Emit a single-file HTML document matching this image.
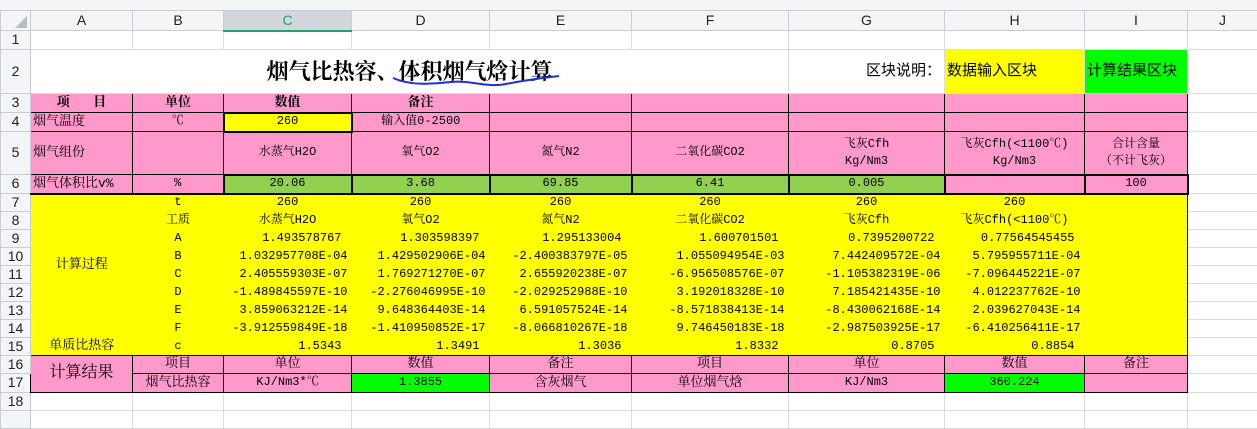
<!DOCTYPE html>
<html><head><meta charset="utf-8">
<style>
body{margin:0;width:1257px;height:413px;overflow:hidden;background:#fff;font-family:"Liberation Mono","Noto Serif CJK SC",monospace;}
.top{position:absolute;left:0;top:0;width:1257px;height:10px;background:#f4f5f7;}
table{position:absolute;left:0;top:10px;border-collapse:collapse;table-layout:fixed;width:1257px;}
td{border:1px solid #dadce2;padding:0;font-size:12px;color:#000;text-align:center;white-space:nowrap;overflow:hidden;line-height:1.1;vertical-align:middle;}
.hd{background:#f4f5f7;color:#222;font-family:"Liberation Sans",sans-serif;font-size:14px;border-color:#c8ccd6;}
.rh{background:#f4f5f7;color:#222;font-family:"Liberation Sans",sans-serif;font-size:14px;border-color:#c8ccd6;}
.p{background:#ff99cc;border:1px solid #000;}
.g{background:#92d050;border:2px solid #000;}
.G{background:#00ff00;border:1px solid #000;}
.b{font-weight:bold;font-size:13px;}
.l{text-align:left;padding-left:2px;font-size:13px;}
.yy{background:#ffff00;border:none;}
.r{text-align:right;padding-right:4px;}
.r2{text-align:right;padding-right:10px;}
</style></head><body>
<div class="top"></div>
<table>
<colgroup><col style="width:30px"><col style="width:102px"><col style="width:91px"><col style="width:128px"><col style="width:138px"><col style="width:142px"><col style="width:157px"><col style="width:156px"><col style="width:140px"><col style="width:103px"><col style="width:70px"></colgroup>
<tr style="height:20px"><td class="hd" style="position:relative"><span style="position:absolute;left:14px;bottom:2px;width:0;height:0;border-left:12px solid transparent;border-bottom:12px solid #b8bcc4"></span></td><td class="hd">A</td><td class="hd">B</td><td class="hd" style="background:#d3d6dc;color:#1e9e6a;border-bottom:2px solid #21a366">C</td><td class="hd">D</td><td class="hd">E</td><td class="hd">F</td><td class="hd">G</td><td class="hd">H</td><td class="hd">I</td><td class="hd">J</td></tr>
<tr style="height:19px"><td class="rh">1</td><td></td><td></td><td></td><td></td><td></td><td></td><td></td><td></td><td></td><td></td></tr>
<tr style="height:44px"><td class="rh">2</td><td colspan="6" style="font-family:'Noto Serif CJK SC',serif;font-size:22px;font-weight:bold;position:relative;border-right-color:#dadce2">烟气比热容、体积烟气焓计算<svg style="position:absolute;left:360px;top:24px" width="170" height="14"><path d="M2 4 C20 12 40 10 60 8 C80 6 95 14 115 10 C135 6 150 4 168 2" stroke="#1a2fd8" stroke-width="2" fill="none"/></svg></td><td style="text-align:right;font-family:'Liberation Sans','Noto Sans CJK SC',sans-serif;font-size:15px;padding-right:3px">区块说明：</td><td class="l" style="background:#ffff00;font-family:'Liberation Sans','Noto Sans CJK SC',sans-serif;font-size:15px">数据输入区块</td><td class="l" style="background:#00ff00;font-family:'Liberation Sans','Noto Sans CJK SC',sans-serif;font-size:15px">计算结果区块</td><td></td></tr>
<tr style="height:19px"><td class="rh">3</td><td class="p b">项&nbsp;&nbsp;&nbsp;目</td><td class="p b">单位</td><td class="p b">数值</td><td class="p b">备注</td><td class="p"></td><td class="p"></td><td class="p"></td><td class="p"></td><td class="p"></td><td></td></tr>
<tr style="height:19px"><td class="rh">4</td><td class="p l">烟气温度</td><td class="p">℃</td><td style="background:#ffff00;border:2px solid #000">260</td><td class="p">输入值0-2500</td><td class="p"></td><td class="p"></td><td class="p"></td><td class="p"></td><td class="p"></td><td></td></tr>
<tr style="height:43px"><td class="rh">5</td><td class="p l">烟气组份</td><td class="p"></td><td class="p">水蒸气H2O</td><td class="p">氧气O2</td><td class="p">氮气N2</td><td class="p">二氧化碳CO2</td><td class="p" style="line-height:1.4">飞灰Cfh<br>Kg/Nm3</td><td class="p" style="line-height:1.4">飞灰Cfh(&lt;1100℃)<br>Kg/Nm3</td><td class="p" style="line-height:1.4">合计含量<br>（不计飞灰）</td><td></td></tr>
<tr style="height:19px"><td class="rh">6</td><td class="p l">烟气体积比v%</td><td class="p">%</td><td class="g">20.06</td><td class="g">3.68</td><td class="g">69.85</td><td class="g">6.41</td><td class="g">0.005</td><td class="p" style="border:2px solid #000"></td><td class="p" style="border:2px solid #000">100</td><td></td></tr>
<tr style="height:18px"><td class="rh">7</td><td class="yy" style="border-top:2px solid #000"></td><td class="yy" style="border-top:2px solid #000">t</td><td class="yy" style="border-top:2px solid #000">260</td><td class="yy" style="border-top:2px solid #000">260</td><td class="yy" style="border-top:2px solid #000">260</td><td class="yy" style="border-top:2px solid #000">260</td><td class="yy" style="border-top:2px solid #000">260</td><td class="yy" style="border-top:2px solid #000">260</td><td class="yy" style="border-top:2px solid #000;border-right:1px solid #000"></td><td></td></tr>
<tr style="height:18px"><td class="rh">8</td><td class="yy"></td><td class="yy">工质</td><td class="yy">水蒸气H2O</td><td class="yy">氧气O2</td><td class="yy">氮气N2</td><td class="yy">二氧化碳CO2</td><td class="yy">飞灰Cfh</td><td class="yy">飞灰Cfh(&lt;1100℃)</td><td class="yy" style="border-right:1px solid #000"></td><td></td></tr>
<tr style="height:18px"><td class="rh">9</td><td class="yy" rowspan="4" style="font-size:13px">计算过程</td><td class="yy">A</td><td class="yy r2">1.493578767</td><td class="yy r2">1.303598397</td><td class="yy r2">1.295133004</td><td class="yy r2">1.600701501</td><td class="yy r2">0.7395200722</td><td class="yy r2">0.77564545455</td><td class="yy" style="border-right:1px solid #000"></td><td></td></tr>
<tr style="height:18px"><td class="rh">10</td><td class="yy">B</td><td class="yy r">1.032957708E-04</td><td class="yy r">1.429502906E-04</td><td class="yy r">-2.400383797E-05</td><td class="yy r">1.055094954E-03</td><td class="yy r">7.442409572E-04</td><td class="yy r">5.795955711E-04</td><td class="yy" style="border-right:1px solid #000"></td><td></td></tr>
<tr style="height:18px"><td class="rh">11</td><td class="yy">C</td><td class="yy r">2.405559303E-07</td><td class="yy r">1.769271270E-07</td><td class="yy r">2.655920238E-07</td><td class="yy r">-6.956508576E-07</td><td class="yy r">-1.105382319E-06</td><td class="yy r">-7.096445221E-07</td><td class="yy" style="border-right:1px solid #000"></td><td></td></tr>
<tr style="height:18px"><td class="rh">12</td><td class="yy">D</td><td class="yy r">-1.489845597E-10</td><td class="yy r">-2.276046995E-10</td><td class="yy r">-2.029252988E-10</td><td class="yy r">3.192018328E-10</td><td class="yy r">7.185421435E-10</td><td class="yy r">4.012237762E-10</td><td class="yy" style="border-right:1px solid #000"></td><td></td></tr>
<tr style="height:18px"><td class="rh">13</td><td class="yy"></td><td class="yy">E</td><td class="yy r">3.859063212E-14</td><td class="yy r">9.648364403E-14</td><td class="yy r">6.591057524E-14</td><td class="yy r">-8.571838413E-14</td><td class="yy r">-8.430062168E-14</td><td class="yy r">2.039627043E-14</td><td class="yy" style="border-right:1px solid #000"></td><td></td></tr>
<tr style="height:18px"><td class="rh">14</td><td class="yy"></td><td class="yy">F</td><td class="yy r">-3.912559849E-18</td><td class="yy r">-1.410950852E-17</td><td class="yy r">-8.066810267E-18</td><td class="yy r">9.746450183E-18</td><td class="yy r">-2.987503925E-17</td><td class="yy r">-6.410256411E-17</td><td class="yy" style="border-right:1px solid #000"></td><td></td></tr>
<tr style="height:18px"><td class="rh">15</td><td class="yy" style="font-size:13px">单质比热容</td><td class="yy">c</td><td class="yy r2">1.5343</td><td class="yy r2">1.3491</td><td class="yy r2">1.3036</td><td class="yy r2">1.8332</td><td class="yy r2">0.8705</td><td class="yy r2">0.8854</td><td class="yy" style="border-right:1px solid #000"></td><td></td></tr>
<tr style="height:18px"><td class="rh">16</td><td class="p" rowspan="2" style="font-size:16px">计算结果</td><td class="p" style="font-size:13px">项目</td><td class="p" style="font-size:13px">单位</td><td class="p" style="font-size:13px">数值</td><td class="p" style="font-size:13px">备注</td><td class="p" style="font-size:13px">项目</td><td class="p" style="font-size:13px">单位</td><td class="p" style="font-size:13px">数值</td><td class="p" style="font-size:13px">备注</td><td></td></tr>
<tr style="height:19px"><td class="rh">17</td><td class="p" style="font-size:13px">烟气比热容</td><td class="p">KJ/Nm3*℃</td><td class="G">1.3855</td><td class="p" style="font-size:13px">含灰烟气</td><td class="p" style="font-size:13px">单位烟气焓</td><td class="p">KJ/Nm3</td><td class="G">360.224</td><td class="p"></td><td></td></tr>
<tr style="height:18px"><td class="rh">18</td><td></td><td></td><td></td><td></td><td></td><td></td><td></td><td></td><td></td><td></td></tr>
<tr style="height:18px"><td class="rh"></td><td></td><td></td><td></td><td></td><td></td><td></td><td></td><td></td><td></td><td></td></tr>
</table>
</body></html>
